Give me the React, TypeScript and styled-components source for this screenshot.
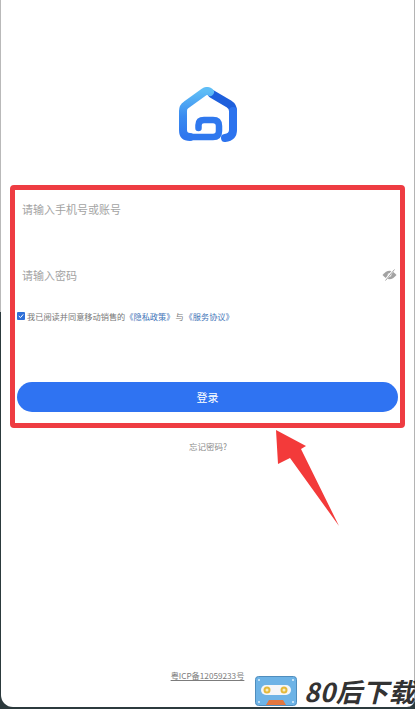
import styled, { createGlobalStyle } from "styled-components";

const cjk = `"Noto Sans CJK SC", "Noto Sans", sans-serif`;

const GlobalStyle = createGlobalStyle`
  html, body {
    margin: 0;
    padding: 0;
    height: 100%;
    overflow: hidden;
  }
  #root {
    height: 100%;
  }
`;

const Backdrop = styled.div`
  position: relative;
  height: 709px;
  width: 415px;
  box-sizing: border-box;
  padding: 0 0 2px 1px;
  background: linear-gradient(to bottom, #b9b9b9 0, #b9b9b9 44%, #2c3a3d 44%, #2c3a3d 100%);
  overflow: hidden;
`;

const Screen = styled.main`
  height: 100%;
  box-sizing: border-box;
  padding-top: 87px;
  display: flex;
  flex-direction: column;
  align-items: stretch;
  background: #fff;
  border-right: 1px solid #b4b4b4;
  border-radius: 0 0 8px 12px;
  font-family: ${cjk};
`;

const LogoWrap = styled.div`
  display: flex;
  justify-content: center;
  height: 56px;
  margin-left: 1px;
`;

const Form = styled.form`
  margin-top: 33px;
  padding: 0 16px;
  display: flex;
  flex-direction: column;
`;

const Field = styled.div`
  height: 66px;
  display: flex;
  align-items: center;
  padding: 0 1px 0 5px;
`;

const Input = styled.input`
  flex: 1;
  min-width: 0;
  border: none;
  outline: none;
  padding: 0;
  background: transparent;
  font-family: ${cjk};
  font-size: 11px;
  color: #333;

  &::placeholder {
    color: #a3a3a3;
    opacity: 1;
  }
`;

const Agreement = styled.div`
  height: 16px;
  display: flex;
  align-items: center;
  font-size: 8.2px;
  color: #777;
  white-space: nowrap;
`;

const Check = styled.span`
  width: 8px;
  height: 8px;
  display: flex;
  align-items: center;
  justify-content: center;
  background: #2f6fd8;
  border-radius: 1px;
  margin-right: 2px;
`;

const PolicyLink = styled.a`
  color: #3f74b8;
  text-decoration: none;
`;

const Joiner = styled.span`
  margin: 0 1px;
`;

const LoginButton = styled.button`
  margin-top: 58px;
  height: 30px;
  border: none;
  border-radius: 15px;
  background: #2f73f2;
  color: #fff;
  font-family: ${cjk};
  font-size: 11px;
  padding: 0;
`;

const Forgot = styled.div`
  margin-top: 27px;
  line-height: 14px;
  font-size: 8.5px;
  color: #8b8b8b;
  text-align: center;
  padding-left: 1px;
`;

const Footer = styled.div`
  margin-top: auto;
  margin-bottom: 26px;
  text-align: center;
  font-size: 8.2px;
  line-height: 12px;
  color: #7c7c7c;
  text-decoration: underline;
`;

const Highlight = styled.div`
  position: absolute;
  left: 10px;
  top: 185px;
  width: 395px;
  height: 243px;
  box-sizing: border-box;
  border: 5px solid #ee3c42;
  border-radius: 4px;
  pointer-events: none;
`;

const Arrow = styled.svg`
  position: absolute;
  left: 270px;
  top: 425px;
`;

const Watermark = styled.div`
  position: absolute;
  left: 255px;
  top: 676px;
  display: flex;
  align-items: center;
  gap: 7px;
  white-space: nowrap;
`;

const WatermarkText = styled.span`
  font-family: "Noto Sans CJK SC", sans-serif;
  font-weight: 700;
  font-style: italic;
  font-size: 26px;
  line-height: 30px;
  letter-spacing: 0.5px;
  color: #333;
`;

const HouseLogo = () => (
  <svg width="60" height="56" viewBox="0 0 60 56" fill="none" strokeWidth="8" strokeLinecap="round">
    <defs>
      <linearGradient id="houseLeft" x1="0" y1="0" x2="0" y2="1">
        <stop offset="0" stopColor="#5fbdf6" />
        <stop offset="0.55" stopColor="#3a8bf0" />
        <stop offset="1" stopColor="#2f76ee" />
      </linearGradient>
    </defs>
    <path d="M34 7 L51 17 Q55 19.500 55 24" stroke="#1e5fdc" />
    <path d="M55 24 V43 Q55 50 47 51" stroke="#2c73ee" />
    <path d="M12 50 Q5 50 5 43 V24 Q5 20 8 18 L26 5 Q29 3 32 5" stroke="url(#houseLeft)" />
    <path d="M12 50 H35 Q41 50 41 44 V39 Q41 33 35 33 H26 Q20.500 33 20.500 38 V41" stroke="#2f78ee" strokeWidth="6.500" />
  </svg>
);

const EyeIcon = () => (
  <svg width="15" height="12" viewBox="0 0 15 12">
    <path d="M0.500 6 Q7.500 -2.500 14.500 6 Q7.500 14.500 0.500 6 Z" fill="#a2a2a2" />
    <circle cx="7.500" cy="6" r="2" fill="#e2e2e2" />
    <path d="M3 11.500 L12 0.500" stroke="#fff" strokeWidth="2" />
    <path d="M3.500 11.500 L12.500 0.500" stroke="#a2a2a2" strokeWidth="1" />
  </svg>
);

const TapeIcon = () => (
  <svg width="42" height="30" viewBox="0 0 42 30">
    <rect x="0.500" y="0.500" width="41" height="29" rx="3" fill="#6db3e6" stroke="#4f8dbd" />
    <rect x="6" y="9" width="30" height="10" rx="5" fill="#f4f6f8" />
    <circle cx="12" cy="14" r="3.500" fill="#e3b93c" />
    <circle cx="12" cy="14" r="1.500" fill="#f6ecc0" />
    <circle cx="29" cy="14" r="3.500" fill="#e3b93c" />
    <circle cx="29" cy="14" r="1.500" fill="#f6ecc0" />
    <path d="M11 29 L14 24 H28 L31 29 Z" fill="#e2763f" />
    <circle cx="4" cy="4" r="1" fill="#dff0fb" />
    <circle cx="38" cy="4" r="1" fill="#dff0fb" />
    <circle cx="4" cy="26" r="1" fill="#dff0fb" />
    <circle cx="38" cy="26" r="1" fill="#dff0fb" />
  </svg>
);

export default function App() {
  return (
    <>
      <GlobalStyle />
      <Backdrop>
        <Screen>
          <LogoWrap>
            <HouseLogo />
          </LogoWrap>
          <Form onSubmit={(e) => e.preventDefault()}>
            <Field>
              <Input placeholder="请输入手机号或账号" />
            </Field>
            <Field>
              <Input type="password" placeholder="请输入密码" />
              <EyeIcon />
            </Field>
            <Agreement>
              <Check>
                <svg width="6" height="6" viewBox="0 0 6 6" fill="none">
                  <path d="M0.800 3 L2.500 4.600 L5.200 1.400" stroke="#fff" strokeWidth="1" />
                </svg>
              </Check>
              <span>我已阅读并同意移动销售的</span>
              <PolicyLink>《隐私政策》</PolicyLink>
              <Joiner>与</Joiner>
              <PolicyLink>《服务协议》</PolicyLink>
            </Agreement>
            <LoginButton type="submit">登录</LoginButton>
          </Form>
          <Forgot>忘记密码?</Forgot>
          <Footer>粤ICP备12059233号</Footer>
        </Screen>
        <Highlight />
        <Arrow width="75" height="105" viewBox="270 425 75 105">
          <path d="M276 430 L306 446 L301 449 L339 526 L290 458 L278 464 Z" fill="#f33a3a" />
        </Arrow>
        <Watermark>
          <TapeIcon />
          <WatermarkText>80后下载</WatermarkText>
        </Watermark>
      </Backdrop>
    </>
  );
}
